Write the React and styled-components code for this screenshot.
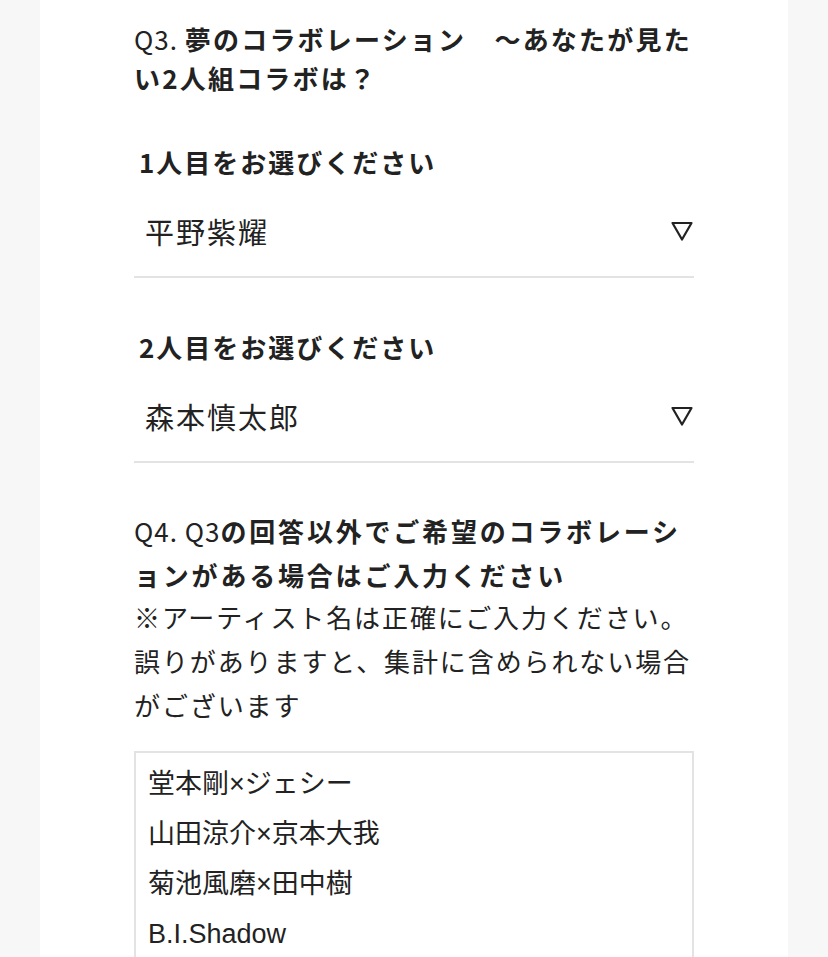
import React from 'react'
import styled, { createGlobalStyle } from 'styled-components'

const GlobalStyle = createGlobalStyle`
  html, body {
    margin: 0;
    padding: 0;
    background: #f7f7f7;
  }
  body {
    font-family: "Noto Sans CJK JP", "Noto Sans", sans-serif;
    color: #222;
  }
`

function Triangle() {
  return (
    <svg width="24" height="22" viewBox="0 0 24 22" fill="none">
      <path d="M2.5 3 L21.5 3 L12 19.5 Z" stroke="#222" strokeWidth="2.2" strokeLinejoin="round" />
    </svg>
  )
}

function SelectField({ label, value }) {
  return (
    <Field>
      <Label>{label}</Label>
      <SelectBox>
        <SelectValue>{value}</SelectValue>
        <Triangle />
      </SelectBox>
    </Field>
  )
}

const answers = `堂本剛×ジェシー
山田涼介×京本大我
菊池風磨×田中樹
B.I.Shadow`

function App() {
  return (
    <>
      <GlobalStyle />
      <Panel>
        <Question $spacing="2.2px" $lh="39px">
          <Num>Q3. </Num>夢のコラボレーション　〜あなたが見たい2人組コラボは？
        </Question>

        <SelectField label="1人目をお選びください" value="平野紫耀" />
        <SelectField label="2人目をお選びください" value="森本慎太郎" />

        <Block>
          <Question $spacing="2.8px" $lh="44px">
            <Num>Q4. Q3</Num>の回答以外でご希望のコラボレーションがある場合はご入力ください
          </Question>
          <Note>
            ※アーティスト名は正確にご入力ください。誤りがありますと、集計に含められない場合がございます
          </Note>
          <Answer readOnly defaultValue={answers} />
        </Block>
      </Panel>
    </>
  )
}

export default App

const Panel = styled.div`
  width: 748px;
  height: 957px;
  margin: 0 auto;
  background: #fff;
  box-sizing: border-box;
  padding: 19px 0 0 94px;
  overflow: hidden;
`

const Question = styled.div`
  width: 560px;
  font-size: 26px;
  font-weight: 700;
  line-height: ${p => p.$lh};
  letter-spacing: ${p => p.$spacing};
  color: #222;
  line-break: anywhere;
`

const Num = styled.span`
  font-weight: 400;
  letter-spacing: 1px;
`

const Field = styled.div`
  width: 560px;
  margin-top: 45px;
  & + & {
    margin-top: 49px;
  }
`

const Label = styled.div`
  padding-left: 5px;
  font-size: 26px;
  font-weight: 700;
  line-height: 40px;
  letter-spacing: 2px;
`

const SelectBox = styled.div`
  display: flex;
  align-items: center;
  justify-content: space-between;
  margin-top: 29px;
  padding: 0 0 25px 11px;
  border-bottom: 2px solid #e3e3e3;
`

const SelectValue = styled.div`
  font-size: 29px;
  line-height: 40px;
  letter-spacing: 2px;
`

const Block = styled.div`
  margin-top: 46px;
  width: 560px;
`

const Note = styled.div`
  margin-top: -2px;
  font-size: 26px;
  line-height: 44px;
  letter-spacing: 1.9px;
`

const Answer = styled.textarea`
  display: block;
  width: 560px;
  height: 260px;
  margin-top: 24px;
  box-sizing: border-box;
  padding: 6px 12px;
  border: 2px solid #e3e3e3;
  border-radius: 0;
  outline: none;
  resize: none;
  background: #fff;
  color: #222;
  font-family: "Liberation Sans", "Noto Sans CJK JP", sans-serif;
  font-size: 27px;
  line-height: 50px;
  overflow: hidden;
`
